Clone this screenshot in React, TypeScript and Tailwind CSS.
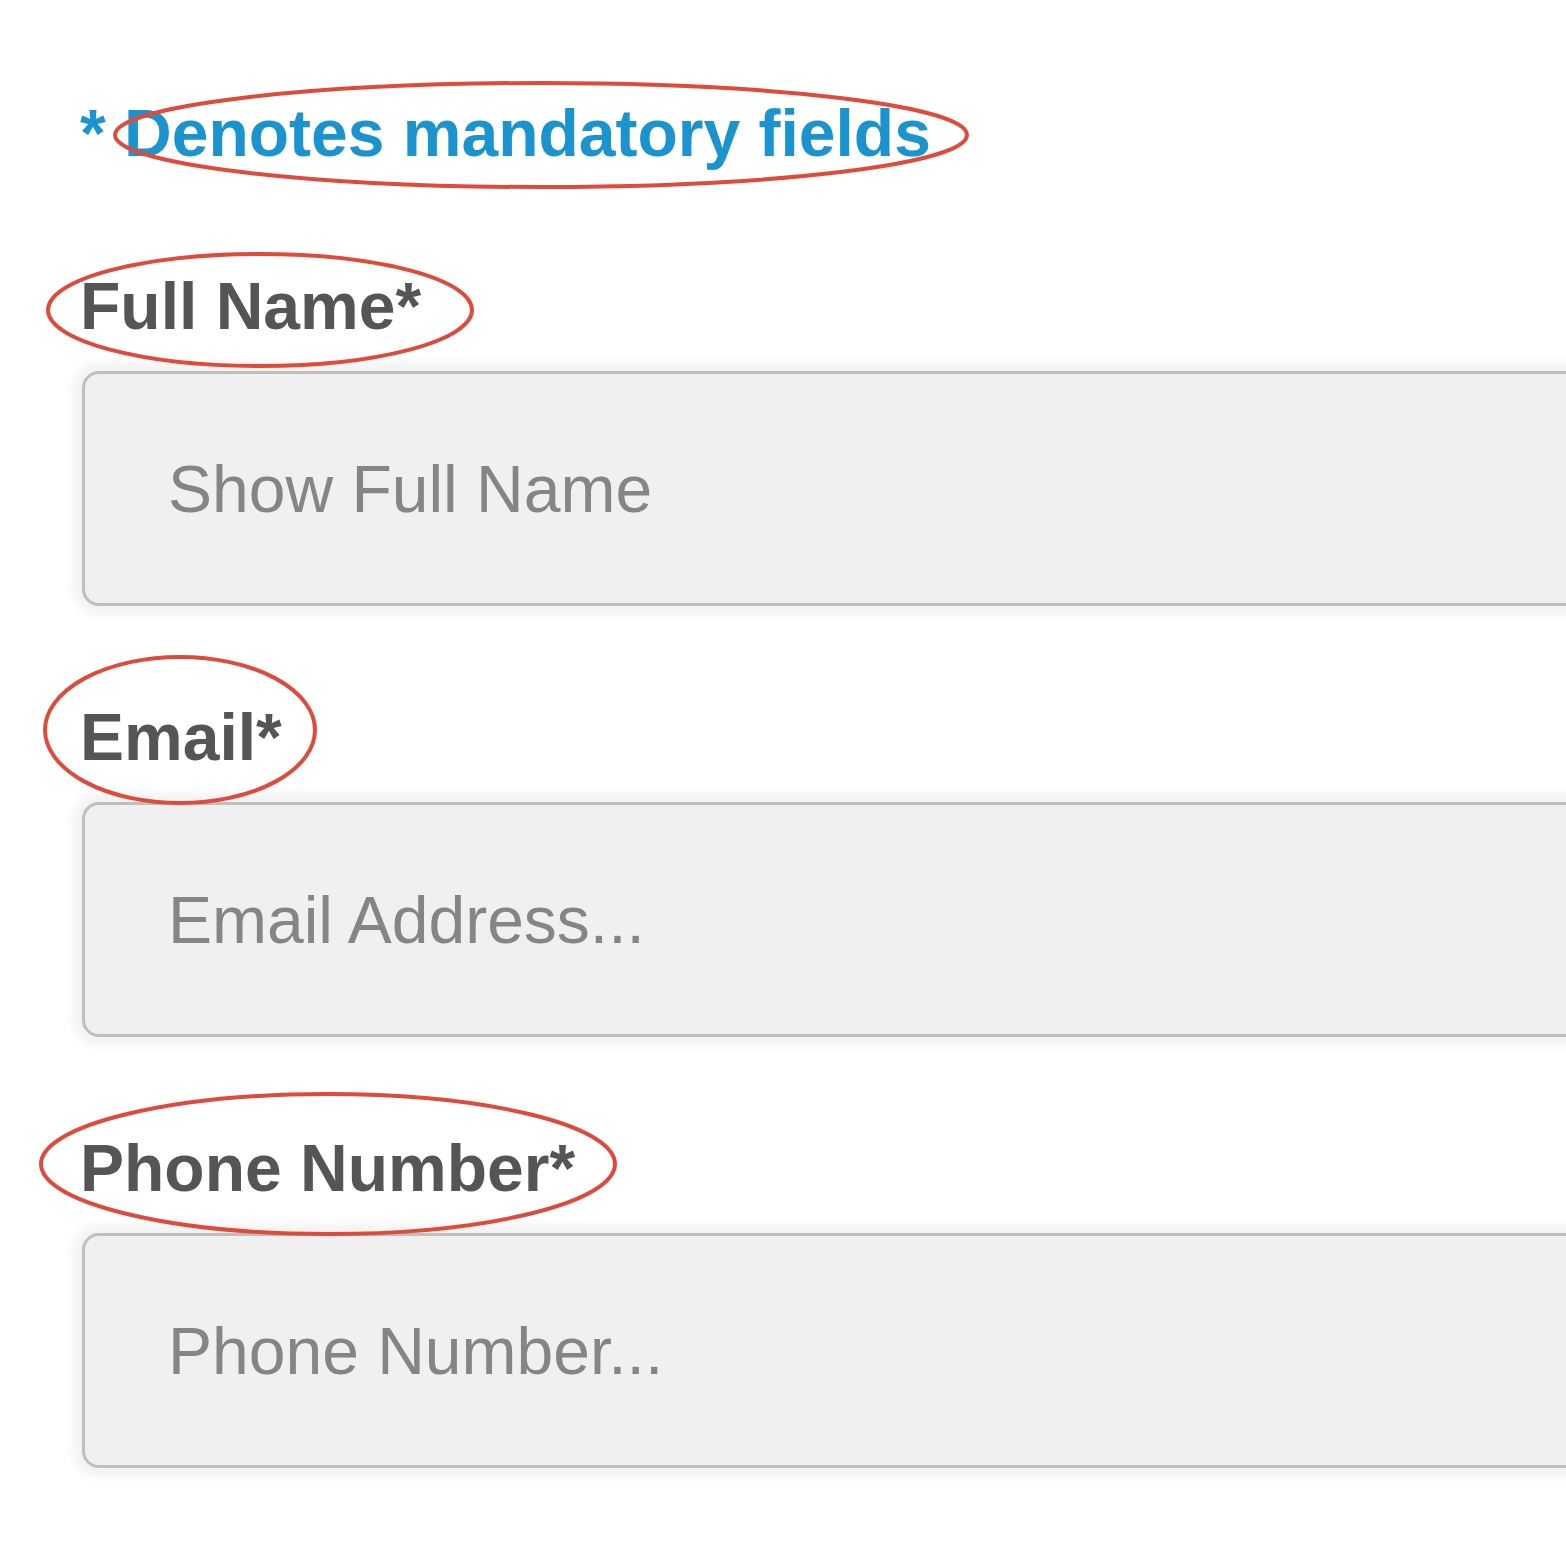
import React from "react";

const fields = [
  { label: "Full Name*", placeholder: "Show Full Name" },
  { label: "Email*", placeholder: "Email Address..." },
  { label: "Phone Number*", placeholder: "Phone Number..." },
];

export default function App() {
  return (
    <div
      className="relative w-[1566px] h-[1561px] overflow-hidden bg-white"
      style={{ fontFamily: '"Liberation Sans", Arial, Helvetica, sans-serif' }}
    >
      <div className="pl-[80px] pt-[100px]">
        <p className="text-[66px] leading-[66px] font-bold text-[#1b93cf] whitespace-nowrap">
          * Denotes mandatory fields
        </p>
        <div className="mt-[107px] flex flex-col gap-[98px]">
          {fields.map((f) => (
            <div key={f.label} className="flex flex-col gap-[32px]">
              <label className="text-[66px] leading-[66px] font-bold text-[#555555] whitespace-nowrap">
                {f.label}
              </label>
              <input
                readOnly
                placeholder={f.placeholder}
                className="ml-[2px] w-[1600px] h-[235px] shrink-0 rounded-[17px] border-[3px] border-[#bfbfbf] bg-[#f0f0f0] pl-[83px] text-[66px] text-[#555] placeholder:text-[#858585] outline-none shadow-[0_0_10px_9px_rgba(0,0,0,0.05)]"
                style={{ fontFamily: '"Liberation Sans", Arial, Helvetica, sans-serif' }}
              />
            </div>
          ))}
        </div>
      </div>
      <svg
        className="absolute inset-0 pointer-events-none"
        width="1566"
        height="1561"
        viewBox="0 0 1566 1561"
      >
        <g fill="none" stroke="#e04a3a" strokeWidth="4">
          <ellipse cx="541" cy="135" rx="426" ry="52" />
          <ellipse cx="260" cy="310" rx="212" ry="56" />
          <ellipse cx="180" cy="730" rx="135" ry="73" />
          <ellipse cx="328" cy="1164" rx="287" ry="70" />
        </g>
      </svg>
    </div>
  );
}
